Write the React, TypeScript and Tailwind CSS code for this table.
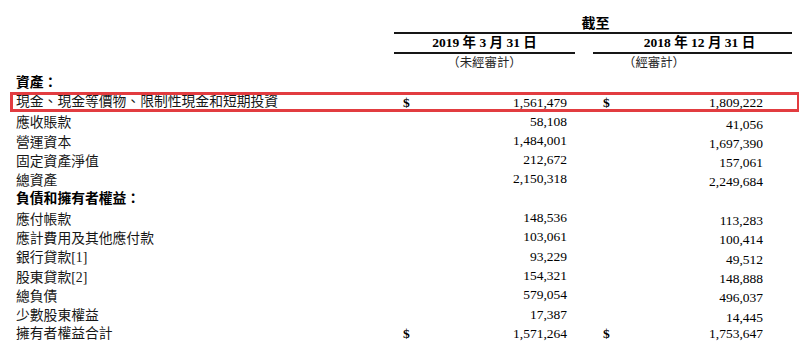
import React from 'react';

interface Row {
  label: string;
  bold?: boolean;
  a?: string;
  b?: string;
  dollar?: boolean;
  boxed?: boolean;
}

const rows: Row[] = [
  { label: '資產：', bold: true },
  { label: '現金、現金等價物、限制性現金和短期投資', a: '1,561,479', b: '1,809,222', dollar: true, boxed: true },
  { label: '應收賬款', a: '58,108', b: '41,056' },
  { label: '營運資本', a: '1,484,001', b: '1,697,390' },
  { label: '固定資產淨值', a: '212,672', b: '157,061' },
  { label: '總資產', a: '2,150,318', b: '2,249,684' },
  { label: '負債和擁有者權益：', bold: true },
  { label: '應付帳款', a: '148,536', b: '113,283' },
  { label: '應計費用及其他應付款', a: '103,061', b: '100,414' },
  { label: '銀行貸款[1]', a: '93,229', b: '49,512' },
  { label: '股東貸款[2]', a: '154,321', b: '148,888' },
  { label: '總負債', a: '579,054', b: '496,037' },
  { label: '少數股東權益', a: '17,387', b: '14,445' },
  { label: '擁有者權益合計', a: '1,571,264', b: '1,753,647', dollar: true },
];

const grid = 'grid grid-cols-[384px_181px_18px_199px]';

export default function App() {
  return (
    <div
      className="w-[799px] h-[342px] bg-white text-black overflow-hidden pl-[10px]"
      style={{ fontFamily: '"Liberation Serif", "Noto Sans CJK TC", serif' }}
    >
      {/* header */}
      <div className={grid}>
        <div />
        <div className="col-span-3 h-[34px] border-b-2 border-neutral-900 flex items-end justify-center pl-[5px]">
          <span className="font-bold text-[14px] leading-[16px]">截至</span>
        </div>
      </div>
      <div className={grid}>
        <div />
        <div className="h-[20px] border-b-2 border-neutral-900 flex items-end justify-center">
          <span className="font-bold text-[13.5px] leading-[18px]">2019 年 3 月 31 日</span>
        </div>
        <div />
        <div className="h-[20px] border-b-2 border-neutral-900 flex items-end justify-center pl-[14px]">
          <span className="font-bold text-[13.5px] leading-[18px]">2018 年 12 月 31 日</span>
        </div>
      </div>
      <div className={`${grid} h-[19px] items-center text-[12.4px] text-neutral-800`}>
        <div />
        <div className="text-center">（未經審計）</div>
        <div />
        <div className="pl-[30px]">（經審計）</div>
      </div>

      {/* body */}
      {rows.map((r) => (
        <div
          key={r.label}
          className={`${grid} h-[19.3px] text-[13.8px] ${
            r.boxed ? 'outline-[3px] outline-solid outline-[#e23c40] -outline-offset-[3px] mr-[-1px]' : ''
          }`}
        >
          <div className={`pl-[6px] flex items-center whitespace-nowrap ${r.bold ? 'font-bold' : 'text-neutral-900'}`}>
            {r.label}
          </div>
          <div className={`flex items-center justify-between pl-[9px] pr-[8px] text-[13.5px] ${r.dollar ? '' : 'pb-[4px]'}`}>
            <span className="font-bold">{r.dollar ? '$' : ''}</span>
            <span>{r.a}</span>
          </div>
          <div />
          <div className={`flex items-center justify-between pl-[10px] pr-[29px] text-[13.5px] ${r.dollar ? '' : 'pt-[2px]'}`}>
            <span className="font-bold">{r.dollar ? '$' : ''}</span>
            <span>{r.b}</span>
          </div>
        </div>
      ))}
    </div>
  );
}
